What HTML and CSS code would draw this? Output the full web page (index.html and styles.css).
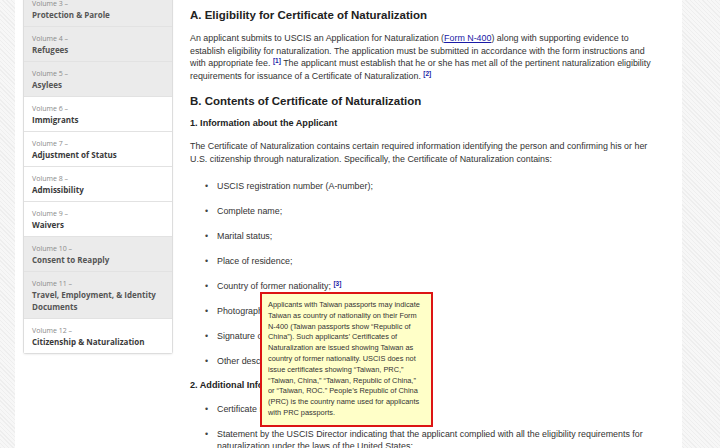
FILE: index.html
```html
<!DOCTYPE html>
<html lang="en">
<head>
<meta charset="utf-8">
<title>Policy Manual – Certificate of Naturalization</title>
<link rel="stylesheet" href="styles.css">
</head>
<body>
<div class="page">
  <nav class="sidebar">
    <a class="vol vol-alt"><span class="vol-label">Volume 3 –</span><span class="vol-title">Protection &amp; Parole</span></a>
    <a class="vol vol-alt"><span class="vol-label">Volume 4 –</span><span class="vol-title">Refugees</span></a>
    <a class="vol vol-alt"><span class="vol-label">Volume 5 –</span><span class="vol-title">Asylees</span></a>
    <a class="vol"><span class="vol-label">Volume 6 –</span><span class="vol-title">Immigrants</span></a>
    <a class="vol"><span class="vol-label">Volume 7 –</span><span class="vol-title">Adjustment of Status</span></a>
    <a class="vol"><span class="vol-label">Volume 8 –</span><span class="vol-title">Admissibility</span></a>
    <a class="vol"><span class="vol-label">Volume 9 –</span><span class="vol-title">Waivers</span></a>
    <a class="vol vol-alt"><span class="vol-label">Volume 10 –</span><span class="vol-title">Consent to Reapply</span></a>
    <a class="vol vol-alt"><span class="vol-label">Volume 11 –</span><span class="vol-title">Travel, Employment, &amp; Identity Documents</span></a>
    <a class="vol vol-last"><span class="vol-label">Volume 12 –</span><span class="vol-title">Citizenship &amp; Naturalization</span></a>
  </nav>
  <main class="content">
    <h2 class="h-section">A. Eligibility for Certificate of Naturalization</h2>
    <p class="para">An applicant submits to USCIS an Application for Naturalization (<a class="link">Form N-400</a>) along with supporting evidence to establish eligibility for naturalization. The application must be submitted in accordance with the form instructions and with appropriate fee. <sup class="fn">[1]</sup> The applicant must establish that he or she has met all of the pertinent naturalization eligibility requirements for issuance of a Certificate of Naturalization. <sup class="fn">[2]</sup></p>
    <h2 class="h-section h-b">B. Contents of Certificate of Naturalization</h2>
    <h3 class="h-sub">1. Information about the Applicant</h3>
    <p class="para para-b">The Certificate of Naturalization contains certain required information identifying the person and confirming his or her U.S. citizenship through naturalization. Specifically, the Certificate of Naturalization contains:</p>
    <ul class="list">
      <li>USCIS registration number (A-number);</li>
      <li>Complete name;</li>
      <li>Marital status;</li>
      <li>Place of residence;</li>
      <li>Country of former nationality; <sup class="fn">[3]</sup></li>
      <li>Photograph of the applicant;</li>
      <li>Signature of the applicant; and</li>
      <li>Other descriptive information.</li>
    </ul>
    <h3 class="h-sub h-2">2. Additional Information on Certificate of Naturalization</h3>
    <ul class="list list-2">
      <li>Certificate number;</li>
      <li>Statement by the USCIS Director indicating that the applicant complied with all the eligibility requirements for naturalization under the laws of the United States;</li>
    </ul>
    <div class="tooltip">Applicants with Taiwan passports may indicate Taiwan as country of nationality on their Form N-400 (Taiwan passports show “Republic of China”). Such applicants’ Certificates of Naturalization are issued showing Taiwan as country of former nationality. USCIS does not issue certificates showing “Taiwan, PRC,” “Taiwan, China,” “Taiwan, Republic of China,” or “Taiwan, ROC.” People’s Republic of China (PRC) is the country name used for applicants with PRC passports.</div>
  </main>
</div>
</body>
</html>
```
FILE: styles.css
```css
html, body {
  margin: 0;
  padding: 0;
  height: 100%;
  overflow: hidden;
}
body {
  background-color: #f2f2f2;
  background-image: repeating-linear-gradient(45deg, #eeeeee 0 1px, #f7f7f7 1px 3px);
  font-family: "Liberation Sans", Arial, sans-serif;
}
.page {
  display: flex;
  align-items: flex-start;
  margin: -8px 0 0 15px;
  width: 667px;
  min-height: 470px;
  background: #ffffff;
}
.sidebar {
  display: flex;
  flex-direction: column;
  width: 148px;
  margin-left: 8px;
  border: 1px solid #dddddd;
  border-top: none;
  border-radius: 0 0 3px 3px;
  box-shadow: 0 1px 2px rgba(0,0,0,0.06);
  background: #fff;
}
.vol {
  display: flex;
  flex-direction: column;
  padding: 7px 8px 5px 8px;
  border-bottom: 1px solid #e2e2e2;
  background: #ffffff;
}
.vol-alt {
  background: #ebebeb;
}
.vol-last {
  border-bottom: none;
}
.vol-label {
  font-family: "Open Sans", sans-serif;
  font-size: 7px;
  line-height: 10px;
  color: #8a8a8a;
}
.vol-title {
  font-family: "Open Sans", sans-serif;
  font-weight: 700;
  font-size: 8px;
  line-height: 12px;
  color: #3a3a3a;
}
.vol-alt .vol-title {
  color: #555555;
}
.content {
  position: relative;
  width: 472px;
  margin-left: 17px;
  padding-top: 15px;
  color: #333333;
  font-size: 8.9px;
  line-height: 12.5px;
}
.h-section {
  margin: 0;
  font-size: 11.5px;
  line-height: 16px;
  font-weight: 700;
  color: #222222;
}
.h-b {
  margin-top: 11px;
}
.para {
  margin: 9px 0 0 0;
}
.para-b {
  margin-top: 10px;
}
.link {
  color: #1a1aa6;
  text-decoration: underline;
}
.fn {
  font-size: 6.5px;
  font-weight: 700;
  color: #1a1aa6;
  line-height: 0;
  vertical-align: 3px;
}
.h-sub {
  margin: 8px 0 0 0;
  font-size: 9.1px;
  line-height: 13px;
  font-weight: 700;
  color: #222222;
}
.h-2 {
  margin-top: 11px;
}
.list {
  list-style: none;
  margin: 15px 0 0 0;
  padding: 0 0 0 27px;
}
.list li {
  position: relative;
  margin-bottom: 12.5px;
}
.list li::before {
  content: "•";
  position: absolute;
  left: -12px;
  top: 0;
  color: #444;
}
.list li:last-child {
  margin-bottom: 0;
}
.list-2 {
  margin-top: 11px;
}
.tooltip {
  position: absolute;
  left: 70px;
  top: 300px;
  width: 153px;
  padding: 6px 10px 6px 6px;
  background: #ffffc8;
  border: 2px solid #dc1414;
  font-size: 7.4px;
  line-height: 10.8px;
  color: #333333;
}
```
